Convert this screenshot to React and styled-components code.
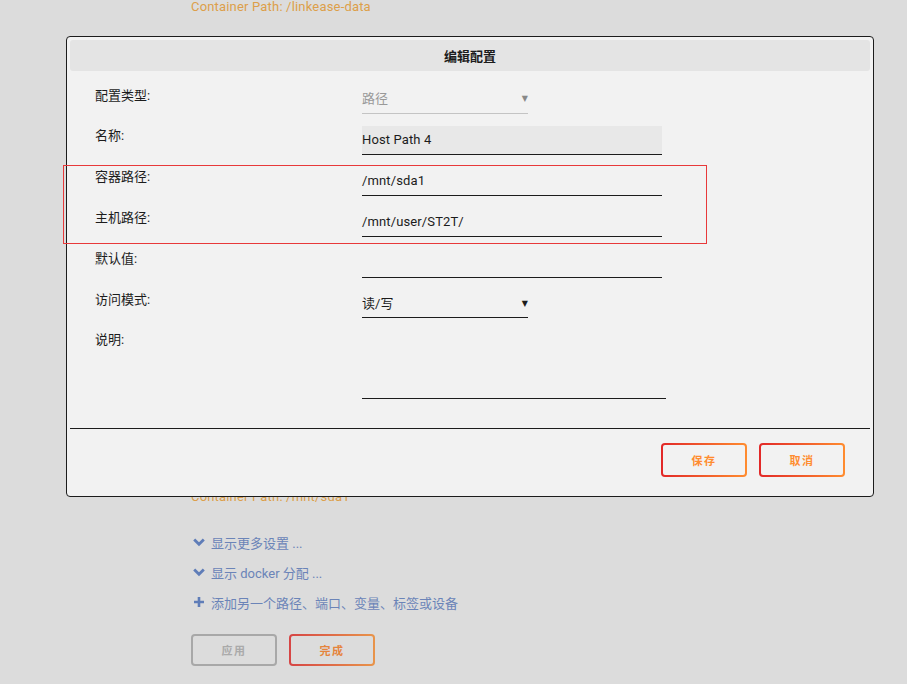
import React from "react";
import styled, { createGlobalStyle } from "styled-components";

const Global = createGlobalStyle`
  html, body { margin: 0; padding: 0; height: 100%; overflow: hidden; }
  body { background: #dcdcdc; font-family: Roboto, "Noto Sans CJK SC", sans-serif; }
`;
const Page = styled.div`
  position: relative; width: 907px; height: 684px; overflow: hidden; background: #dcdcdc;
  padding-left: 191px; box-sizing: border-box;
`;
const Path = styled.div`
  font-size: 13px; line-height: 13px; color: #dd9f4a; height: 13px; letter-spacing: 0.18px;
  margin-top: ${p => p.$top}px;
`;
const Links = styled.div`
  display: flex; flex-direction: column; margin-top: 28px; gap: 8px;
`;
const LinkRow = styled.div`
  display: flex; align-items: center; gap: 6px; height: 22px;
  font-size: 13px; color: #6b84b8; padding-left: 2px;
`;
const Buttons = styled.div`
  display: flex; gap: 12px; margin-top: 21px;
`;
const Btn = styled.button`
  box-sizing: border-box; width: ${p => p.$w}px; height: ${p => p.$h}px; padding: 0;
  border: 2px solid transparent; border-radius: 4px;
  background:
    linear-gradient(${p => p.$bg}, ${p => p.$bg}) padding-box,
    linear-gradient(90deg, ${p => p.$from}, ${p => p.$to}) border-box;
  font-family: inherit; font-size: 11px; font-weight: 700; letter-spacing: 1.5px;
  color: ${p => p.$color};
`;
const Modal = styled.div`
  position: absolute; left: 66px; top: 36px; width: 808px; height: 461px; box-sizing: border-box;
  border: 1px solid #1c1c1c; border-radius: 4px; background: #f2f2f2;
  padding: 3px 3px 0; display: flex; flex-direction: column;
`;
const Title = styled.div`
  height: 31px; background: #e4e4e4; border-radius: 3px; display: flex; align-items: center;
  justify-content: center; font-size: 13px; font-weight: 700; color: #1c1c1c;
`;
const Form = styled.div`
  display: flex; flex-direction: column; padding: 9px 0 0 25px; height: 357px; box-sizing: border-box;
`;
const Row = styled.div`
  display: flex; height: ${p => p.$h || 41}px;
`;
const Label = styled.div`
  width: 267px; font-size: 13px; line-height: 30px; height: 30px; color: #1c1c1c; flex: none;
  margin-top: ${p => p.$mt ?? 0}px;
`;
const Field = styled.div`
  box-sizing: border-box; width: ${p => p.$w}px; height: ${p => p.$fh || 29}px; margin-top: 5px;
  border-bottom: 1px solid ${p => p.$line || "#1c1c1c"};
  background: ${p => p.$bg || "transparent"};
  font-size: 13px; line-height: 27px; color: ${p => p.$color || "#1c1c1c"}; letter-spacing: 0.12px;
  display: flex; justify-content: space-between; align-items: center; padding-bottom: 1px;
`;
const Arrow = styled.span`
  font-size: 8px; color: ${p => p.$color}; font-family: "DejaVu Sans", sans-serif;
`;
const Rule = styled.div`
  height: 1px; background: #1c1c1c; flex: none;
`;
const Footer = styled.div`
  display: flex; justify-content: flex-end; gap: 12px; padding: 14px 25px 0 0;
`;
const RedBox = styled.div`
  position: absolute; left: 63px; top: 165px; width: 644px; height: 79px; box-sizing: border-box;
  border: 1px solid #e8393a; pointer-events: none;
`;

const Chevron = () => (
  <svg width="12" height="9" viewBox="0 0 12 9"><path d="M1.2 1.5 6 6.3l4.8-4.8" fill="none" stroke="#5f7db8" strokeWidth="2.8" /></svg>
);
const Plus = () => (
  <svg width="12" height="10" viewBox="0 0 10 10"><path d="M5 0v10M0 5h10" fill="none" stroke="#5f7db8" strokeWidth="2.6" /></svg>
);

export default function App() {
  return (
    <Page>
      <Global />
      <Path $top={0}>Container Path: /linkease-data</Path>
      <Path $top={477}>Container Path: /mnt/sda1</Path>
      <Links>
        <LinkRow><Chevron />显示更多设置 ...</LinkRow>
        <LinkRow><Chevron />显示 docker 分配 ...</LinkRow>
        <LinkRow><Plus />添加另一个路径、端口、变量、标签或设备</LinkRow>
      </Links>
      <Buttons>
        <Btn $w={86} $h={32} $bg="#dcdcdc" $from="#a8a8a8" $to="#a8a8a8" $color="#aaaaaa">应用</Btn>
        <Btn $w={86} $h={32} $bg="#dcdcdc" $from="#d64545" $to="#e8944a" $color="#e5843c">完成</Btn>
      </Buttons>
      <Modal>
        <Title>编辑配置</Title>
        <Form>
          <Row>
            <Label $mt={1}>配置类型:</Label>
            <Field $w={166} $line="#c4c4c4" $color="#999">路径<Arrow $color="#888">▼</Arrow></Field>
          </Row>
          <Row>
            <Label>名称:</Label>
            <Field $w={300} $bg="#e8e8e8" $line="#1c1c1c">Host Path 4</Field>
          </Row>
          <Row>
            <Label>容器路径:</Label>
            <Field $w={300}>/mnt/sda1</Field>
          </Row>
          <Row>
            <Label>主机路径:</Label>
            <Field $w={300}>/mnt/user/ST2T/</Field>
          </Row>
          <Row>
            <Label>默认值:</Label>
            <Field $w={300} />
          </Row>
          <Row $h={40}>
            <Label>访问模式:</Label>
            <Field $w={166} $fh={28}>读/写<Arrow $color="#1c1c1c">▼</Arrow></Field>
          </Row>
          <Row $h={79}>
            <Label>说明:</Label>
            <Field $w={304} $fh={69} />
          </Row>
        </Form>
        <Rule />
        <Footer>
          <Btn $w={86} $h={34} $bg="#f2f2f2" $from="#e22828" $to="#ff8c2f" $color="#ff8c2f">保存</Btn>
          <Btn $w={86} $h={34} $bg="#f2f2f2" $from="#e22828" $to="#ff8c2f" $color="#ff8c2f">取消</Btn>
        </Footer>
      </Modal>
      <RedBox />
    </Page>
  );
}
